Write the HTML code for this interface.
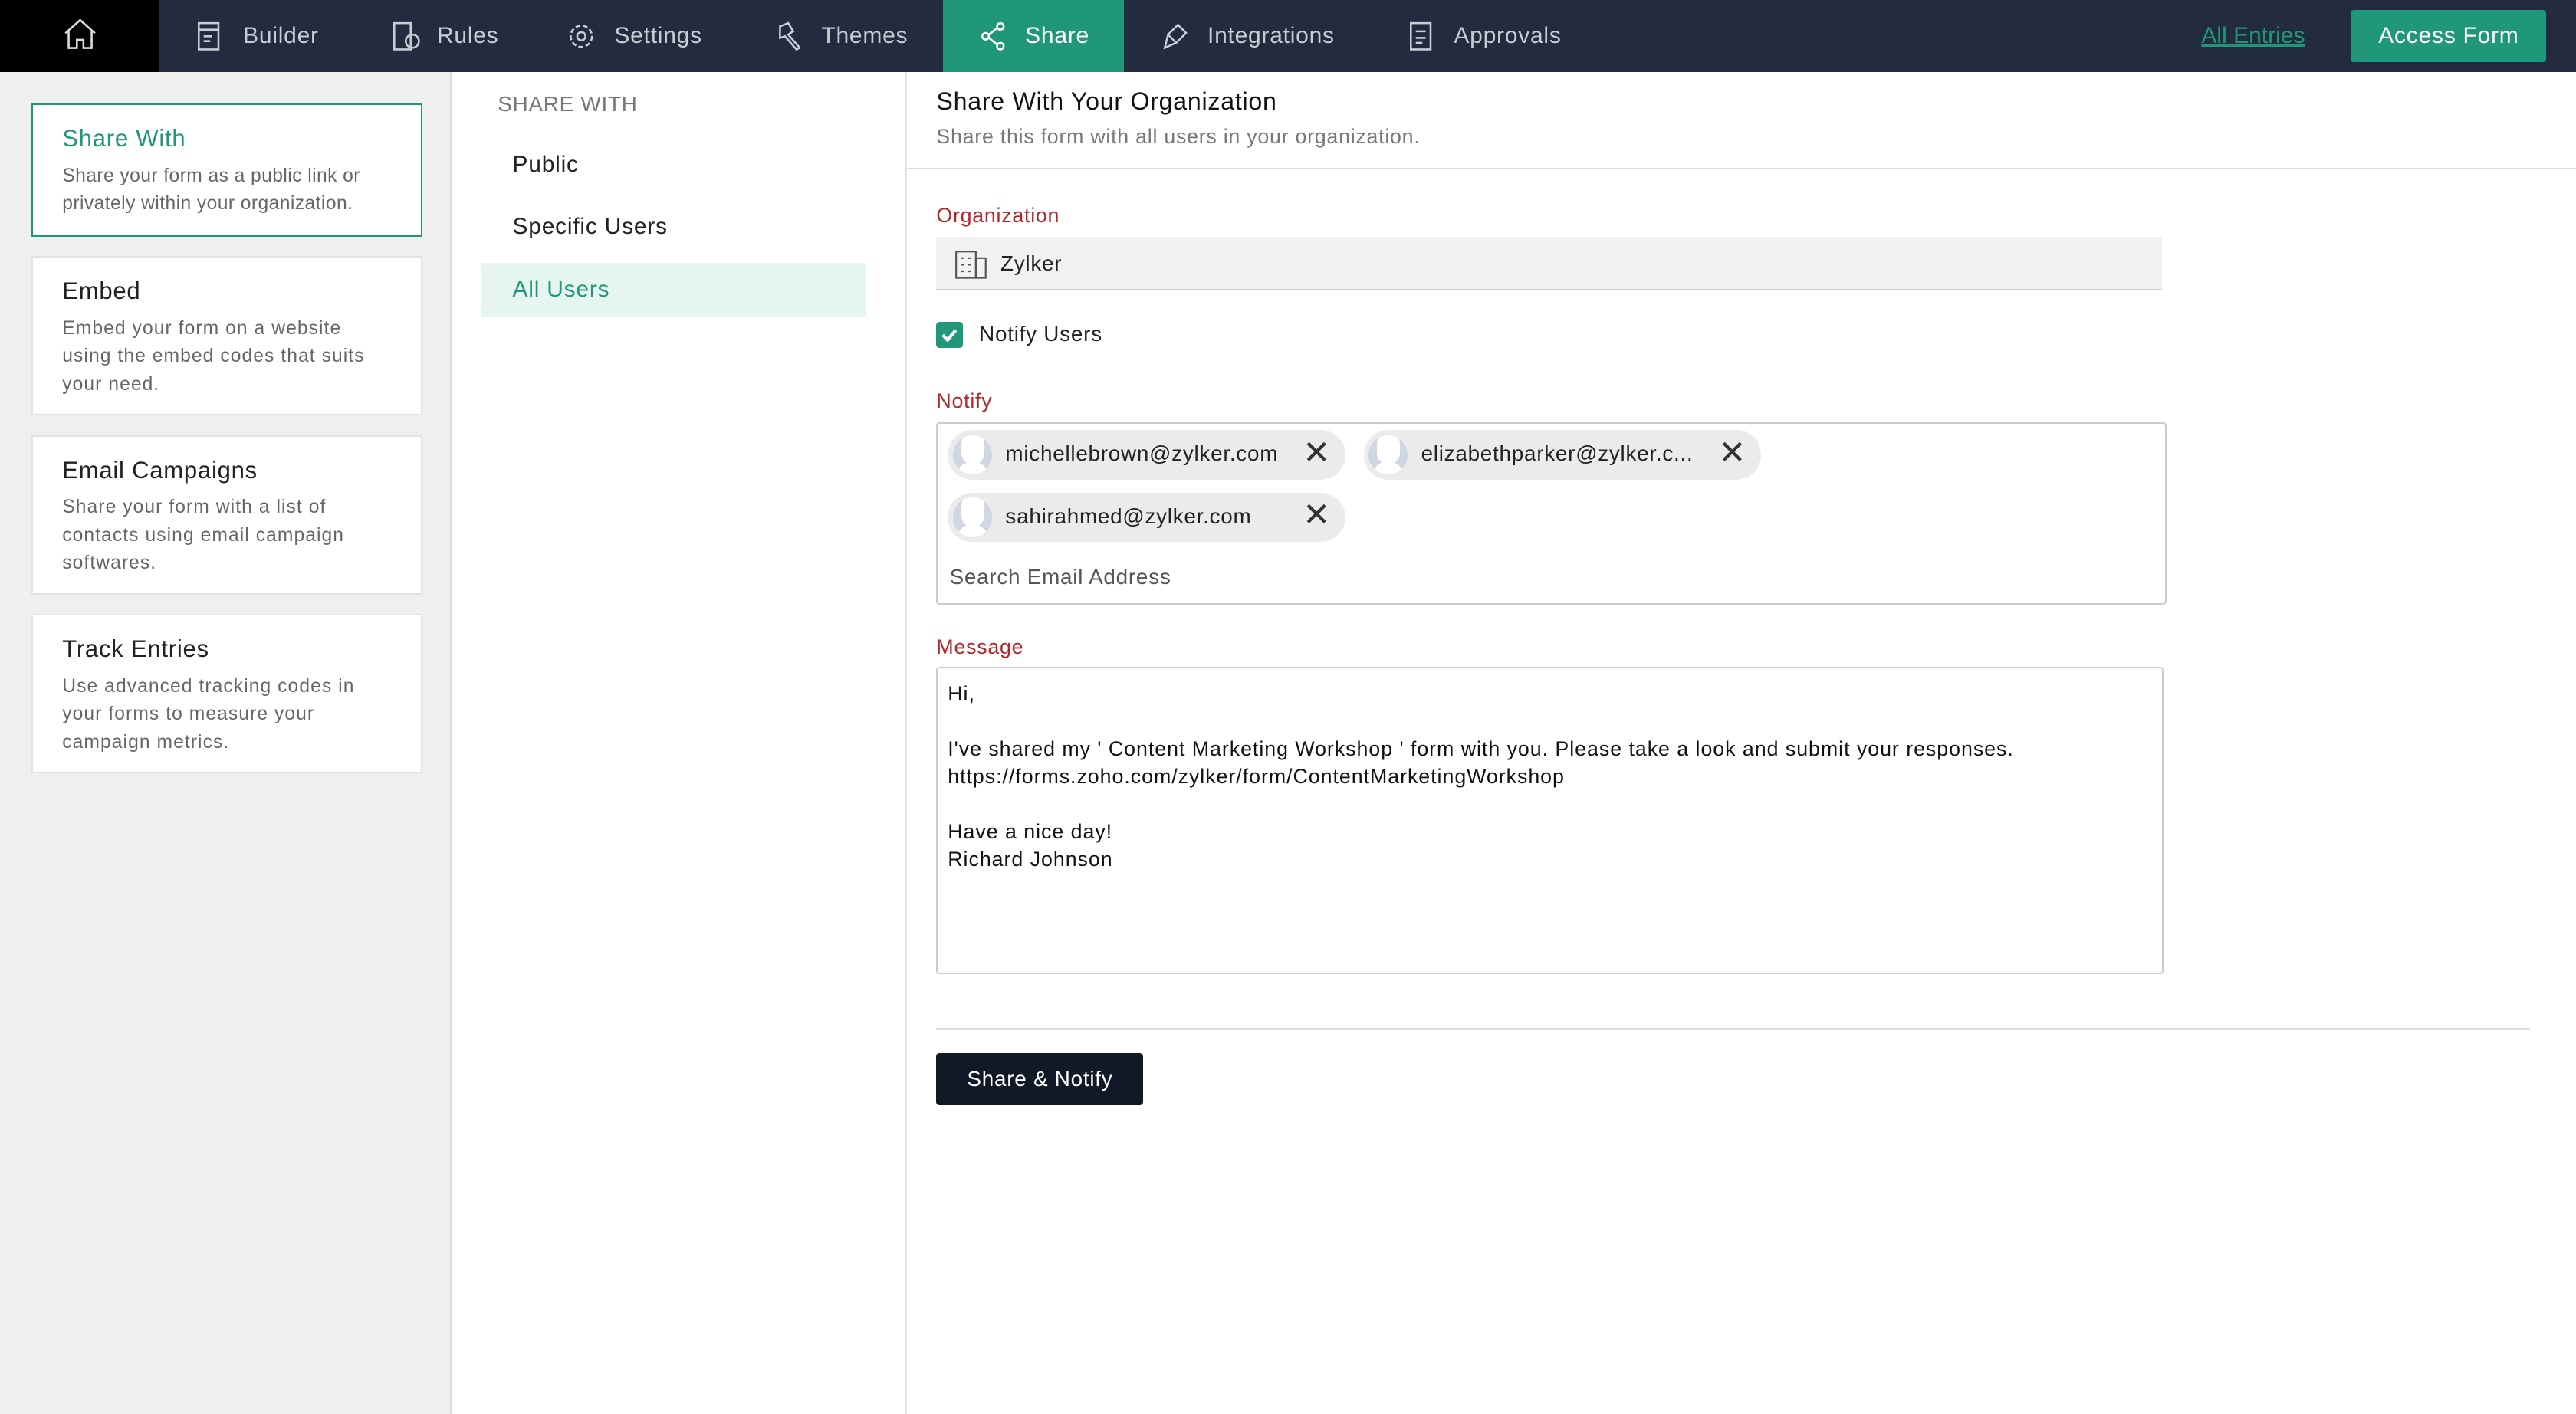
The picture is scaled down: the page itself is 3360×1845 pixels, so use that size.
<!DOCTYPE html>
<html><head><meta charset="utf-8"><style>
*{box-sizing:border-box;margin:0;padding:0}
html,body{width:3360px;height:1845px;overflow:hidden;background:#fff}
#w{width:1568px;height:861px;zoom:2.142857;position:relative;font-family:"Liberation Sans",sans-serif;color:#222;font-size:13px;letter-spacing:0.35px}
.top{position:absolute;left:0;top:0;width:1568px;height:44px;background:#232b3f}
.home{position:absolute;left:0;top:0;width:97px;height:44px;background:#000}
.tab{position:absolute;top:0;height:44px;line-height:44px;color:#c9ccd3;font-size:14px}
.tab svg{position:absolute;left:0;top:13px}
.share{background:#21977a;color:#fff}
.side{position:absolute;left:0;top:44px;width:275px;height:817px;background:#efefef;border-right:1px solid #ddd}
.card{position:absolute;left:19px;width:238px;background:#fff;border:1px solid #e2e2e2;padding:12px 30px 12px 18px}
.card h3{font-weight:normal;font-size:14.5px;color:#222;margin-bottom:6px}
.card p{font-size:11.5px;color:#666;line-height:17px;letter-spacing:0.5px}
.mid{position:absolute;left:275px;top:44px;width:277px;height:817px;border-right:1px solid #e4e4e4}
.mi{position:absolute;left:18px;width:234px;height:33px;line-height:33px;padding-left:19px;font-size:14px}
.lbl{position:absolute;left:570px;color:#b3262a;font-size:12.5px}
.av{position:absolute;left:3px;top:3px;width:24px;height:24px;border-radius:12px;background:#d0d6e4;overflow:hidden}
.av:before{content:"";position:absolute;left:5px;top:-2px;width:14px;height:20px;border-radius:7px;background:#fff}
.av:after{content:"";position:absolute;left:2px;top:16px;width:20px;height:12px;border-radius:10px 10px 0 0;background:#fff}
</style></head><body><div id="w">
<div class="top"></div>
<div class="home"><svg width="22" height="20" viewBox="0 0 22 20" style="position:absolute;left:38px;top:11px" fill="none" stroke="#ddd" stroke-width="1.2"><path d="M2 9L11 1l9 8M4 8v10h5v-5h4v5h5V8"/></svg></div>
<div class="tab" style="left:119px;width:90px"><svg width="18" height="18" fill="none" stroke="#c9ccd3" stroke-width="1.2"><rect x="2" y="1" width="12" height="16"/><path d="M2 5h12M5 9h5M5 12h4"/></svg><span style="margin-left:29px">Builder</span></div>
<div class="tab" style="left:238px;width:70px"><svg width="18" height="18" fill="none" stroke="#c9ccd3" stroke-width="1.2"><rect x="2" y="1" width="10" height="16"/><circle cx="13" cy="12" r="4"/></svg><span style="margin-left:28px">Rules</span></div>
<div class="tab" style="left:345px;width:90px"><svg width="18" height="18" fill="none" stroke="#c9ccd3" stroke-width="1.2"><circle cx="9" cy="9" r="6.5" stroke-dasharray="3 1.5"/><circle cx="9" cy="9" r="2.5"/></svg><span style="margin-left:29px">Settings</span></div>
<div class="tab" style="left:472px;width:90px"><svg width="18" height="18" fill="none" stroke="#c9ccd3" stroke-width="1.2"><path d="M3 3l5-2 3 5-3 2 7 8-2 1-7-8-3 1z"/></svg><span style="margin-left:28px">Themes</span></div>
<div class="tab share" style="left:574px;width:110px"><svg width="18" height="18" style="left:22px" fill="none" stroke="#fff" stroke-width="1.2"><circle cx="4" cy="9" r="2"/><circle cx="13" cy="3" r="2"/><circle cx="13" cy="15" r="2"/><path d="M6 8l5-4M6 10l5 4"/></svg><span style="margin-left:50px">Share</span></div>
<div class="tab" style="left:707px;width:110px"><svg width="18" height="18" fill="none" stroke="#c9ccd3" stroke-width="1.2"><path d="M4 8l6-6 5 5-6 6zM4 8l-2 8 7-3"/></svg><span style="margin-left:28px">Integrations</span></div>
<div class="tab" style="left:857px;width:100px"><svg width="18" height="18" fill="none" stroke="#c9ccd3" stroke-width="1.2"><rect x="2" y="1" width="12" height="16"/><path d="M5 6h6M5 10h6M5 13h4"/></svg><span style="margin-left:28px">Approvals</span></div>
<div class="tab" style="left:1340px;color:#21977a;text-decoration:underline;letter-spacing:0">All Entries</div>
<div style="position:absolute;left:1431px;top:6px;width:119px;height:32px;background:#21977a;color:#fff;font-size:14px;line-height:32px;text-align:center;border-radius:2px">Access Form</div>

<div class="side">
<div class="card" style="top:19px;height:81px;border:1px solid #21977a;padding-right:10px"><h3 style="color:#21977a">Share With</h3><p style="letter-spacing:0.2px">Share your form as a public link or privately within your organization.</p></div>
<div class="card" style="top:112px;height:97px"><h3>Embed</h3><p>Embed your form on a website using the embed codes that suits your need.</p></div>
<div class="card" style="top:221px;height:97px"><h3>Email Campaigns</h3><p>Share your form with a list of contacts using email campaign softwares.</p></div>
<div class="card" style="top:330px;height:97px"><h3>Track Entries</h3><p>Use advanced tracking codes in your forms to measure your campaign metrics.</p></div>
</div>

<div class="mid">
<div style="position:absolute;left:28px;top:12px;color:#777;font-size:13px">SHARE WITH</div>
<div class="mi" style="top:40px">Public</div>
<div class="mi" style="top:78px">Specific Users</div>
<div class="mi" style="top:116px;background:#e6f5f0;color:#21977a">All Users</div>
</div>

<div style="position:absolute;left:570px;top:53px;font-size:15px;color:#111">Share With Your Organization</div>
<div style="position:absolute;left:570px;top:76px;font-size:12.5px;color:#777">Share this form with all users in your organization.</div>
<div style="position:absolute;left:552px;top:102px;width:1016px;height:1px;background:#ddd"></div>

<div class="lbl" style="top:124px">Organization</div>
<div style="position:absolute;left:570px;top:144px;width:746px;height:33px;background:#f1f2f1;border-bottom:1px solid #ccc"><svg width="20" height="20" style="position:absolute;left:11px;top:7px" fill="none" stroke="#555" stroke-width="1"><rect x="1" y="2" width="12" height="16"/><rect x="13" y="6" width="6" height="12"/><path d="M4 6h2M8 6h2M4 10h2M8 10h2M4 14h2M8 14h2"/></svg><span style="position:absolute;left:39px;top:9px;font-size:13px">Zylker</span></div>

<div style="position:absolute;left:570px;top:196px;width:16px;height:16px;background:#21977a;border-radius:2px"><svg width="16" height="16" fill="none" stroke="#fff" stroke-width="2"><path d="M4 8l3 3 5-6"/></svg></div>
<div style="position:absolute;left:596px;top:196px;font-size:13px">Notify Users</div>

<div class="lbl" style="top:237px">Notify</div>
<div style="position:absolute;left:570px;top:257px;width:749px;height:111px;border:1px solid #ccc;border-radius:2px"></div>
<div style="position:absolute;left:577px;top:262px;width:242px;height:30px;background:#ebebeb;border-radius:15px"><div class="av"></div><span style="position:absolute;left:35px;top:7px;font-size:13px">michellebrown@zylker.com</span><span style="position:absolute;left:216px;top:2px;font-size:20px;color:#333">✕</span></div>
<div style="position:absolute;left:830px;top:262px;width:242px;height:30px;background:#ebebeb;border-radius:15px"><div class="av"></div><span style="position:absolute;left:35px;top:7px;font-size:13px">elizabethparker@zylker.c...</span><span style="position:absolute;left:216px;top:2px;font-size:20px;color:#333">✕</span></div>
<div style="position:absolute;left:577px;top:300px;width:242px;height:30px;background:#ebebeb;border-radius:15px"><div class="av"></div><span style="position:absolute;left:35px;top:7px;font-size:13px">sahirahmed@zylker.com</span><span style="position:absolute;left:216px;top:2px;font-size:20px;color:#333">✕</span></div>
<div style="position:absolute;left:578px;top:344px;font-size:13px;color:#555">Search Email Address</div>

<div class="lbl" style="top:387px">Message</div>
<div style="position:absolute;left:570px;top:406px;width:747px;height:187px;border:1px solid #ccc;border-radius:2px;padding:7px 6px;font-size:12.5px;line-height:16.8px;color:#111;letter-spacing:0.45px">Hi,<br><br>I've shared my ' Content Marketing Workshop ' form with you. Please take a look and submit your responses.<br>https://forms.zoho.com/zylker/form/ContentMarketingWorkshop<br><br>Have a nice day!<br>Richard Johnson</div>

<div style="position:absolute;left:570px;top:626px;width:970px;height:1px;background:#ddd"></div>
<div style="position:absolute;left:570px;top:641px;width:126px;height:32px;background:#111826;color:#fff;font-size:13px;line-height:32px;text-align:center;border-radius:2px">Share &amp; Notify</div>
</div></body></html>
